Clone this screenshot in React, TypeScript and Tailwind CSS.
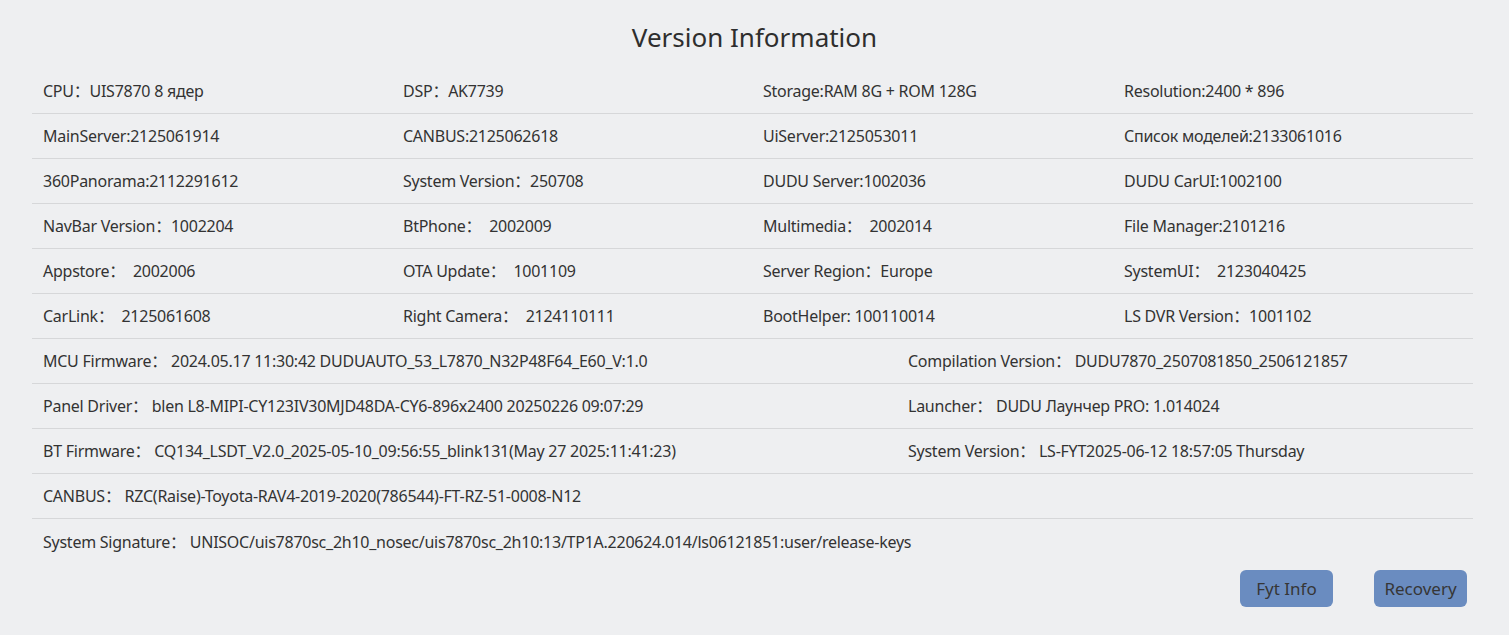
const grid4: string[][] = [
  ["CPU：UIS7870 8 ядер", "DSP：AK7739", "Storage:RAM 8G + ROM 128G", "Resolution:2400 * 896"],
  ["MainServer:2125061914", "CANBUS:2125062618", "UiServer:2125053011", "Список моделей:2133061016"],
  ["360Panorama:2112291612", "System Version：250708", "DUDU Server:1002036", "DUDU CarUI:1002100"],
  ["NavBar Version：1002204", "BtPhone：  2002009", "Multimedia：  2002014", "File Manager:2101216"],
  ["Appstore：  2002006", "OTA Update：  1001109", "Server Region：Europe", "SystemUI：  2123040425"],
  ["CarLink：  2125061608", "Right Camera：  2124110111", "BootHelper: 100110014", "LS DVR Version：1001102"],
];

const grid2: string[][] = [
  ["MCU Firmware： 2024.05.17 11:30:42 DUDUAUTO_53_L7870_N32P48F64_E60_V:1.0", "Compilation Version： DUDU7870_2507081850_2506121857"],
  ["Panel Driver： blen L8-MIPI-CY123IV30MJD48DA-CY6-896x2400 20250226 09:07:29", "Launcher： DUDU Лаунчер PRO: 1.014024"],
  ["BT Firmware： CQ134_LSDT_V2.0_2025-05-10_09:56:55_blink131(May 27 2025:11:41:23)", "System Version： LS-FYT2025-06-12 18:57:05 Thursday"],
];

const single = [
  "CANBUS： RZC(Raise)-Toyota-RAV4-2019-2020(786544)-FT-RZ-51-0008-N12",
  "System Signature： UNISOC/uis7870sc_2h10_nosec/uis7870sc_2h10:13/TP1A.220624.014/ls06121851:user/release-keys",
];

export default function App() {
  return (
    <div className="w-[1509px] h-[635px] bg-[#eeeff1] text-[#333333] font-['Noto_Sans','Noto_Sans_CJK_SC',sans-serif] overflow-hidden">
      <h1 className="h-[69px] pt-[16px] text-center text-[26px] leading-[42px] text-[#2e2e2e]">
        Version Information
      </h1>

      <div className="mx-[32px] w-[1441px] text-[16px] tracking-[-0.25px]">
        {grid4.map((row, i) => (
          <div
            key={i}
            className="grid grid-cols-[360px_360px_361px_1fr] h-[45px] items-center border-b border-[#d6d7d9] pl-[11px]"
          >
            {row.map((cell) => (
              <div key={cell} className="whitespace-pre">{cell}</div>
            ))}
          </div>
        ))}
        {grid2.map((row, i) => (
          <div key={i} className="grid grid-cols-[865px_1fr] h-[45px] items-center border-b border-[#d6d7d9] pl-[11px]">
            {row.map((cell) => (
              <div key={cell} className="whitespace-pre">{cell}</div>
            ))}
          </div>
        ))}
        {single.map((cell, i) => (
          <div
            key={cell}
            className={`flex h-[45px] items-center pl-[11px] whitespace-pre ${i === 0 ? "border-b border-[#d6d7d9]" : ""}`}
          >
            {cell}
          </div>
        ))}
      </div>

      <div className="flex justify-end gap-[41px] pr-[42px] mt-[6px]">
        <button className="w-[93px] h-[37px] rounded-[6px] bg-[#6a8cc0] text-[17px] text-[#363636]">Fyt Info</button>
        <button className="w-[93px] h-[37px] rounded-[6px] bg-[#6a8cc0] text-[17px] text-[#363636]">Recovery</button>
      </div>
    </div>
  );
}
